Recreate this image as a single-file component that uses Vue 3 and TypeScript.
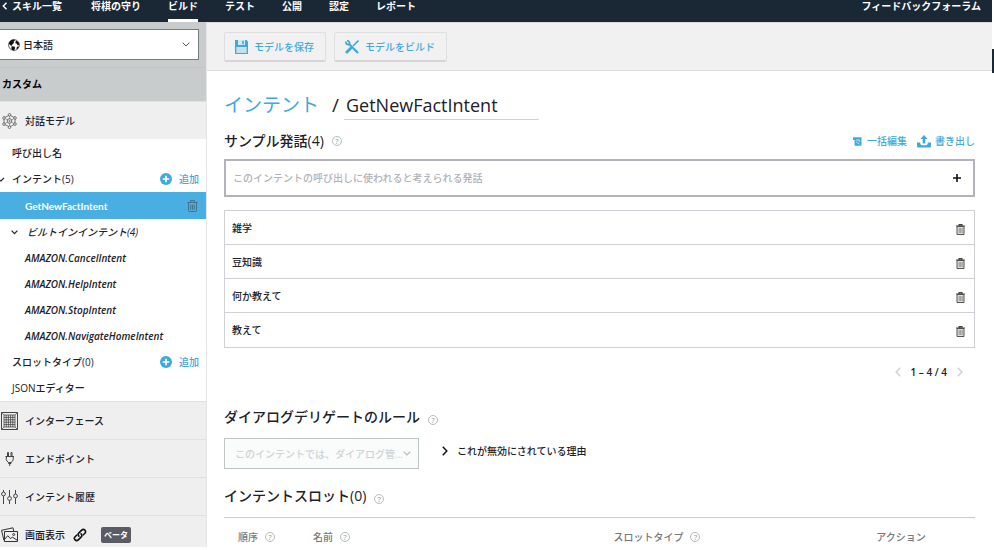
<script setup lang="ts">
import { ref } from 'vue'

interface NavItem {
  label: string
  active?: boolean
}

const navItems: NavItem[] = [
  { label: '将棋の守り' },
  { label: 'ビルド', active: true },
  { label: 'テスト' },
  { label: '公開' },
  { label: '認定' },
  { label: 'レポート' },
]

const builtInIntents: string[] = [
  'AMAZON.CancelIntent',
  'AMAZON.HelpIntent',
  'AMAZON.StopIntent',
  'AMAZON.NavigateHomeIntent',
]

const utterances = ref<string[]>(['雑学', '豆知識', '何か教えて', '教えて'])
const intentName = ref('GetNewFactIntent')
const newUtterance = ref('')

function addUtterance(): void {
  const text = newUtterance.value.trim()
  if (text) {
    utterances.value.push(text)
    newUtterance.value = ''
  }
}

function removeUtterance(index: number): void {
  utterances.value.splice(index, 1)
}
</script>

<template>
  <div class="page">
    <header class="topbar">
      <a href="#" class="back">
        <svg width="6" height="8" viewBox="0 0 6 8"><path d="M4.500.8 1.300 4l3.200 3.200" fill="none" stroke="#fff" stroke-width="1.400" /></svg>
        スキル一覧
      </a>
      <nav class="nav">
        <a v-for="item in navItems" :key="item.label" href="#" :class="{ active: item.active }">{{ item.label }}</a>
      </nav>
      <a href="#" class="forum">フィードバックフォーラム</a>
    </header>

    <div class="body">
      <aside class="sidebar">
        <div class="locale">
          <div class="locale-box">
            <svg class="globe" width="12" height="12" viewBox="0 0 12 12">
              <circle cx="6" cy="6" r="5.400" fill="#fff" stroke="#222" stroke-width=".7" />
              <path d="M.7 4.600C1.500 1.900 3.600.6 6 .6L7 1.600 5.600 2.700 5.900 4 4.500 5.200 3.900 6.700 2.200 6.200ZM8 1.400 10.600 3.200 11.400 5.500 9.800 6.400 8.500 4.600 7.200 3.900ZM3.600 7.200 6.400 7.600 7.200 9 6 11.500 4 11 3.300 9.300ZM9 7.700 11 7.400 9.700 9.900 8.400 10.200Z" fill="#111" />
            </svg>
            <select aria-label="言語">
              <option>日本語</option>
            </select>
            <svg class="caret" width="8" height="5" viewBox="0 0 8 5"><path d="M.7.7 4 4 7.300.7" fill="none" stroke="#555" /></svg>
          </div>
        </div>
        <h2 class="custom">カスタム</h2>
        <a href="#" class="section">
          <svg width="20" height="16" viewBox="0 0 20 16" fill="none" stroke="#555" stroke-width=".8">
            <path d="M9.500 2 15 5v6l-5.500 3L4 11V5Z" />
            <path d="M9.500 2v12M4 5l11 6M15 5 4 11" stroke-width=".5" />
            <g fill="#efefef">
              <circle cx="9.500" cy="1.800" r="1.300" /><circle cx="15" cy="4.900" r="1.300" /><circle cx="15" cy="11.100" r="1.300" />
              <circle cx="9.500" cy="14.200" r="1.300" /><circle cx="4" cy="11.100" r="1.300" /><circle cx="4" cy="4.900" r="1.300" />
              <circle cx="9.500" cy="8" r="2.300" /><circle cx="9.500" cy="8" r=".6" />
            </g>
          </svg>
          対話モデル
        </a>

        <ul class="tree">
          <li><a href="#">呼び出し名</a></li>
          <li>
            <svg class="edge-caret" width="5" height="5" viewBox="0 0 5 5"><path d="M0 3.200 1 4 4 .8" fill="none" stroke="#222" stroke-width="1.200" /></svg>
            <a href="#">インテント(5)</a>
            <button type="button" class="add">
              <svg width="12" height="12" viewBox="0 0 12 12"><circle cx="6" cy="6" r="6" fill="#3fa9dc" /><path d="M6 2.700v6.600M2.700 6h6.600" stroke="#fff" stroke-width="1.600" /></svg>
              追加
            </button>
          </li>
          <li class="selected">
            <a href="#">GetNewFactIntent</a>
            <button type="button" class="icon-button" aria-label="インテントを削除">
              <svg width="11" height="12" viewBox="0 0 11 12" fill="none" stroke="#47718a" stroke-width="1"><path d="M.5 2.500h10M3.500 2.500v-2h4v2M1.500 2.500v8.200q0 .8.8.8h6.400q.8 0 .8-.8V2.500M3.700 4.700v5M5.500 4.700v5M7.300 4.700v5" /></svg>
            </button>
          </li>
          <li class="group">
            <svg width="7" height="5" viewBox="0 0 7 5"><path d="M.6.7 3.500 3.700 6.400.7" fill="none" stroke="#222" stroke-width="1.200" /></svg>
            <a href="#">ビルトインインテント(4)</a>
          </li>
          <li v-for="name in builtInIntents" :key="name" class="leaf"><a href="#">{{ name }}</a></li>
          <li>
            <a href="#">スロットタイプ(0)</a>
            <button type="button" class="add">
              <svg width="12" height="12" viewBox="0 0 12 12"><circle cx="6" cy="6" r="6" fill="#3fa9dc" /><path d="M6 2.700v6.600M2.700 6h6.600" stroke="#fff" stroke-width="1.600" /></svg>
              追加
            </button>
          </li>
          <li><a href="#">JSONエディター</a></li>
        </ul>

        <a href="#" class="section">
          <svg width="20" height="18" viewBox="0 0 20 18" fill="none" stroke="#444">
            <path d="M1.500.5h16v17h-16Z" />
            <path d="M4 3h11v12H4ZM6.200 3v12M8.400 3v12M10.600 3v12M12.800 3v12M4 5.400h11M4 7.800h11M4 10.200h11M4 12.600h11" stroke-width=".8" />
            <path d="m1.500.5 2.500 2.500M17.500.5 15 3M1.500 17.500 4 15M17.500 17.500 15 15" stroke-width=".7" />
          </svg>
          インターフェース
        </a>
        <a href="#" class="section">
          <svg width="20" height="16" viewBox="0 0 20 16" fill="none" stroke="#444">
            <path d="M7.500 5V1.500h1V5M11 5V1.500h1V5M5.500 5.500h8.500M6.300 5.500v3q0 1.500 2.200 3h2.500q2.200-1.500 2.200-3v-3M8.500 11.500v1h2.500v-1M9.700 12.500v2.500" />
          </svg>
          エンドポイント
        </a>
        <a href="#" class="section">
          <svg width="20" height="16" viewBox="0 0 20 16" fill="none" stroke="#444">
            <path d="M3.500 1v2M3.500 7v8M9.500 1v6.500M9.500 11.500V15M15.500 1v4M15.500 9v6" />
            <circle cx="3.500" cy="5" r="1.900" /><circle cx="9.500" cy="9.500" r="1.900" /><circle cx="15.500" cy="7" r="1.900" />
          </svg>
          インテント履歴
        </a>
        <a href="#" class="section">
          <svg width="20" height="16" viewBox="0 0 20 16" fill="none" stroke="#333">
            <path d="M4.500 4.500h13v10h-13ZM4 13.500 1.500 3.300 13 .8 13.800 4.500M4.500 12.500l3.200-3.800 2.600 2.800 2.200-1.300 5 3.200" />
            <circle cx="13.700" cy="7.500" r="1" />
          </svg>
          画面表示
          <svg class="link-icon" width="14" height="14" viewBox="0 0 14 14" fill="none" stroke="#111" stroke-width="1.600" stroke-linecap="round">
            <path d="M5.900 8.100C4.900 7 4.900 5.900 5.700 5.100L8.700 2.100C9.600 1.200 11 1.200 11.900 2.100 12.800 3 12.800 4.400 11.900 5.300L10.400 6.800" />
            <path d="M8.100 5.900C9.100 7 9.100 8.100 8.300 8.900L5.300 11.900C4.400 12.800 3 12.800 2.100 11.900 1.200 11 1.200 9.600 2.100 8.700L3.600 7.200" />
          </svg>
          <span class="beta">ベータ</span>
        </a>
      </aside>

      <main class="main">
        <div class="toolbar">
          <button type="button" class="tool">
            <svg width="13" height="14" viewBox="0 0 13 14"><path d="M0 0h11.500L13 1.500V14H0Z" fill="#3fa9dc" /><path d="M3 0h7v5H3Z" fill="#d5e9f4" /><path d="M7.200.7h1.600v3.500H7.200Z" fill="#3fa9dc" /><path d="M1.300 7h10.400v6H1.300Z" fill="#c4dfed" /></svg>
            モデルを保存
          </button>
          <button type="button" class="tool">
            <svg width="14" height="14" viewBox="0 0 14 14" fill="none" stroke="#3fa9dc">
              <path d="M3.500 3.500 12.300 12.300" stroke-width="2" /><path d="M1 1.500Q.5 5 4.500 4.500 5 .8 2 .7M9.700 9.700l3.500 3.500" stroke-width="1.700" />
              <path d="M13.500.5 8 6" stroke-width="1.600" /><path d="M6.700 7.300 1 13" stroke-width="2.800" />
            </svg>
            モデルをビルド
          </button>
        </div>

        <div class="content">
          <div class="title">
            <a href="#">インテント</a>
            <span class="slash">/</span>
            <input v-model="intentName" type="text" aria-label="インテント名" />
          </div>

          <div class="heading-row">
            <h3>サンプル発話(4)</h3>
            <button type="button" class="help" aria-label="ヘルプ">?</button>
            <div class="actions">
              <button type="button" class="text-button">
                <svg width="9" height="9" viewBox="0 0 9 9"><path d="M0 .3h8.500v8.400H1.600V3H0Z" fill="#3fa9dc" /><path d="M3 3h3.800M3 4.800l3.500 2.400M5.500 3l1.500 2" stroke="#d9edf7" stroke-width=".8" /></svg>
                一括編集
              </button>
              <button type="button" class="text-button upload">
                <svg width="14" height="13" viewBox="0 0 14 13"><path d="M7 0 10.600 4H8.300v4.500H5.700V4H3.400Z" fill="#3fa9dc" /><path d="M0 7.500h3.300v1.200q.5 1.600 2 1.600h3.400q1.500 0 2-1.600V7.500H14v3.800q0 1.200-1.200 1.200H1.200Q0 12.500 0 11.300Z" fill="#3fa9dc" /></svg>
                書き出し
              </button>
            </div>
          </div>

          <form class="entry" @submit.prevent="addUtterance">
            <input v-model="newUtterance" type="text" aria-label="発話" placeholder="このインテントの呼び出しに使われると考えられる発話" />
            <button type="submit" class="icon-button" aria-label="発話を追加">
              <svg width="8" height="8" viewBox="0 0 8 8"><path d="M4 0v8M0 4h8" stroke="#111" stroke-width="1.600" /></svg>
            </button>
          </form>

          <ul class="utterances">
            <li v-for="(text, index) in utterances" :key="text">
              <span>{{ text }}</span>
              <button type="button" class="icon-button" aria-label="発話を削除" @click="removeUtterance(index)">
                <svg width="9" height="11" viewBox="0 0 9 11"><path d="M1 2.500h7v8H1Z" fill="#ddd" stroke="#555" /><path d="M0 2h9M3 1.800V.6h3v1.200" fill="none" stroke="#444" stroke-width="1.100" /><path d="M3.200 4v5M4.700 4v5M6.200 4v5" stroke="#777" stroke-width=".7" /></svg>
              </button>
            </li>
          </ul>

          <div class="pager">
            <button type="button" class="icon-button" aria-label="前へ"><svg width="6" height="10" viewBox="0 0 6 10"><path d="M5.200.8 1.200 5l4 4.200" fill="none" stroke="#d3d3d6" stroke-width="1.600" /></svg></button>
            <span>1 – 4 / 4</span>
            <button type="button" class="icon-button" aria-label="次へ"><svg width="6" height="10" viewBox="0 0 6 10"><path d="M.8.8l4 4.200-4 4.200" fill="none" stroke="#d3d3d6" stroke-width="1.600" /></svg></button>
          </div>

          <div class="heading-row delegate">
            <h3>ダイアログデリゲートのルール</h3>
            <button type="button" class="help low" aria-label="ヘルプ">?</button>
          </div>
          <div class="delegate-row">
            <div class="delegate-select">
              <select disabled aria-label="ダイアログデリゲートのルール">
                <option>このインテントでは、ダイアログ管...</option>
              </select>
              <svg class="caret" width="8" height="5" viewBox="0 0 8 5"><path d="M.7.7 4 4 7.300.7" fill="none" stroke="#b5baba" stroke-width="1.200" /></svg>
            </div>
            <button type="button" class="reason">
              <svg width="6" height="10" viewBox="0 0 6 10"><path d="M.8.8l4 4.200-4 4.200" fill="none" stroke="#111" stroke-width="1.500" /></svg>
              これが無効にされている理由
            </button>
          </div>

          <div class="heading-row slots">
            <h3>インテントスロット(0)</h3>
            <button type="button" class="help low" aria-label="ヘルプ">?</button>
          </div>
          <table class="slot-table">
            <thead>
              <tr>
                <th class="order"><div>順序 <button type="button" class="help" aria-label="ヘルプ">?</button></div></th>
                <th class="name"><div>名前 <button type="button" class="help" aria-label="ヘルプ">?</button></div></th>
                <th class="type"><div>スロットタイプ <button type="button" class="help" aria-label="ヘルプ">?</button></div></th>
                <th><div>アクション</div></th>
              </tr>
            </thead>
          </table>
        </div>
      </main>
    </div>
    <div class="edge-tab"></div>
  </div>
</template>

<style>
body {
  margin: 0;
  background: #fff;
}
</style>

<style scoped>
* {
  box-sizing: border-box;
}
.page {
  position: relative;
  display: flex;
  flex-direction: column;
  height: 100vh;
  padding: 0 2px 3px 0;
  overflow: hidden;
  font: 500 10px/16px "Open Sans", "Noto Sans CJK JP", sans-serif;
  color: #1c2129;
}
a {
  color: inherit;
  text-decoration: none;
}
button,
input,
select {
  margin: 0;
  padding: 0;
  border: 0;
  background: none;
  font: inherit;
  color: inherit;
  outline: 0;
}
button {
  display: flex;
  align-items: center;
  white-space: nowrap;
  cursor: pointer;
}
select {
  appearance: none;
  width: 100%;
  height: 100%;
  opacity: 1;
}
ul {
  margin: 0;
  padding: 0;
  list-style: none;
}
svg {
  display: block;
  flex: none;
}
.topbar {
  display: flex;
  flex: none;
  height: 22px;
  padding: 0 11px 0 2px;
  background: #1a2836;
  color: #fff;
  font-weight: 600;
  line-height: 12px;
}
.back {
  display: flex;
  align-items: center;
  gap: 4px;
  height: 12px;
}
.nav {
  display: flex;
  flex: 1;
  gap: 27px;
  padding-left: 29px;
}
.nav a.active {
  border-bottom: 3px solid #fff;
}
.body {
  display: flex;
  flex: 1;
  min-height: 0;
}
.sidebar {
  flex: none;
  width: 207px;
  overflow: hidden;
  border-right: 1px solid #e6e6e6;
}
.locale {
  padding: 7px 7px 7px 0;
  background: #c9cccc;
}
.locale-box {
  display: flex;
  align-items: center;
  gap: 3px;
  height: 31px;
  padding: 0 8px;
  border: 1px solid #777c7e;
  border-left: 0;
  background: #fff;
}
.custom {
  margin: 0;
  height: 34px;
  padding-left: 2px;
  border-top: 1px solid #c1c4c4;
  background: #c9cccc;
  color: #000;
  font-size: 10px;
  font-weight: 700;
  line-height: 33px;
}
.section {
  display: flex;
  align-items: center;
  gap: 5px;
  height: 38px;
  border-top: 1px solid #e0e0e0;
  background: #efefef;
}
.link-icon {
  margin-left: 3px;
}
.beta {
  margin-left: 9px;
  padding: 0 3px;
  border-radius: 2px;
  background: #5a5b63;
  color: #fff;
  font-size: 8px;
  font-weight: 600;
}
.tree {
  padding-top: 1px;
}
.tree li {
  display: flex;
  align-items: center;
  position: relative;
  height: 26px;
  padding: 0 7px 0 12px;
}
.edge-caret {
  position: absolute;
  left: 0;
}
.add {
  gap: 7px;
  margin-left: auto;
  color: #3fa9dc;
}
.tree .selected {
  height: 27px;
  padding: 0 8px 0 25px;
  background: #49aee1;
  color: #fff;
  font-family: Lato, "Noto Sans CJK JP", sans-serif;
  font-weight: 700;
}
.selected .icon-button {
  margin-left: auto;
}
.tree .group {
  gap: 9px;
  padding-left: 11px;
  font-style: italic;
}
.tree .leaf {
  padding-left: 25px;
  font-style: italic;
  font-weight: 600;
}
.main {
  flex: 1;
  min-width: 0;
  overflow: hidden;
}
.toolbar {
  display: flex;
  gap: 8px;
  height: 49px;
  padding: 9px 17px;
  border-top: 1px solid #d9d9d9;
  border-bottom: 1px solid #dedede;
  background: #f1f1f1;
}
.tool {
  gap: 6px;
  height: 30px;
  padding: 0 11px 0 10px;
  border: 1px solid #dfdfdf;
  border-bottom: 2px solid #d6d6d6;
  border-radius: 2px;
  color: #3fa9dc;
}
.content {
  padding: 20px 17px 0 17px;
}
.title {
  display: flex;
  height: 29px;
  font-size: 19px;
  font-weight: 400;
  line-height: 28px;
}
.title a {
  color: #3fa9dc;
}
.slash {
  padding: 0 5px 0 13px;
}
.title input {
  width: 195px;
  padding-left: 2px;
  border-bottom: 1px solid #ccd3d3;
  font-size: 18px;
}
.heading-row {
  display: flex;
  align-items: center;
  gap: 8px;
  height: 20px;
  margin-top: 11px;
}
h3 {
  margin: 0;
  font-size: 14px;
  font-weight: 500;
  line-height: 20px;
}
.help {
  justify-content: center;
  width: 10px;
  height: 10px;
  border: 1px solid #b4bcbc;
  border-radius: 50%;
  color: #8f9999;
  font-size: 8px;
  line-height: 8px;
}
.help.low {
  margin-top: 6px;
}
.actions {
  display: flex;
  gap: 10px;
  margin-left: auto;
}
.text-button {
  gap: 5px;
  color: #3fa9dc;
}
.upload {
  gap: 4px;
}
.entry {
  display: flex;
  height: 38px;
  margin-top: 8px;
  padding: 0 12px 0 7px;
  border: 2px solid #b4b2bb;
}
.entry input {
  flex: 1;
  min-width: 0;
}
.entry input::placeholder {
  color: #b2b1b9;
  opacity: 1;
}
.utterances {
  margin-top: 13px;
  border: 1px solid #d0d0d6;
}
.utterances li {
  display: flex;
  align-items: center;
  justify-content: space-between;
  height: 34px;
  padding: 0 9px 0 7px;
  border-bottom: 1px solid #d0d0d6;
}
.utterances li:last-child {
  border-bottom: 0;
}
.utterances .icon-button {
  padding-top: 3px;
}
.pager {
  display: flex;
  align-items: center;
  justify-content: flex-end;
  gap: 10px;
  margin-top: 16px;
  padding-right: 12px;
  font-weight: 600;
}
.delegate {
  margin-top: 27px;
}
.delegate-row {
  display: flex;
  gap: 23px;
  margin-top: 11px;
}
.delegate-select {
  display: flex;
  align-items: center;
  width: 195px;
  height: 31px;
  padding: 0 7px 0 10px;
  border: 1px solid #bfc4c4;
  background: #fafbfb;
}
.delegate-select select {
  color: #cfd3d3;
}
.reason {
  gap: 9px;
  height: 26px;
}
.slots {
  margin-top: 17px;
}
.slot-table {
  width: 100%;
  margin-top: 11px;
  border-top: 1px solid #cacaca;
  border-spacing: 0;
  table-layout: fixed;
}
.slot-table th {
  padding: 10px 0 0 14px;
  color: #77777a;
  font-weight: 500;
  text-align: left;
}
.slot-table th div {
  display: flex;
  align-items: center;
  gap: 7px;
  height: 18px;
}
.order {
  width: 10%;
}
.name {
  width: 40%;
}
.type {
  width: 35%;
}
.edge-tab {
  position: absolute;
  top: 49px;
  right: 0;
  width: 2px;
  height: 24px;
  background: #1a2836;
}
</style>
